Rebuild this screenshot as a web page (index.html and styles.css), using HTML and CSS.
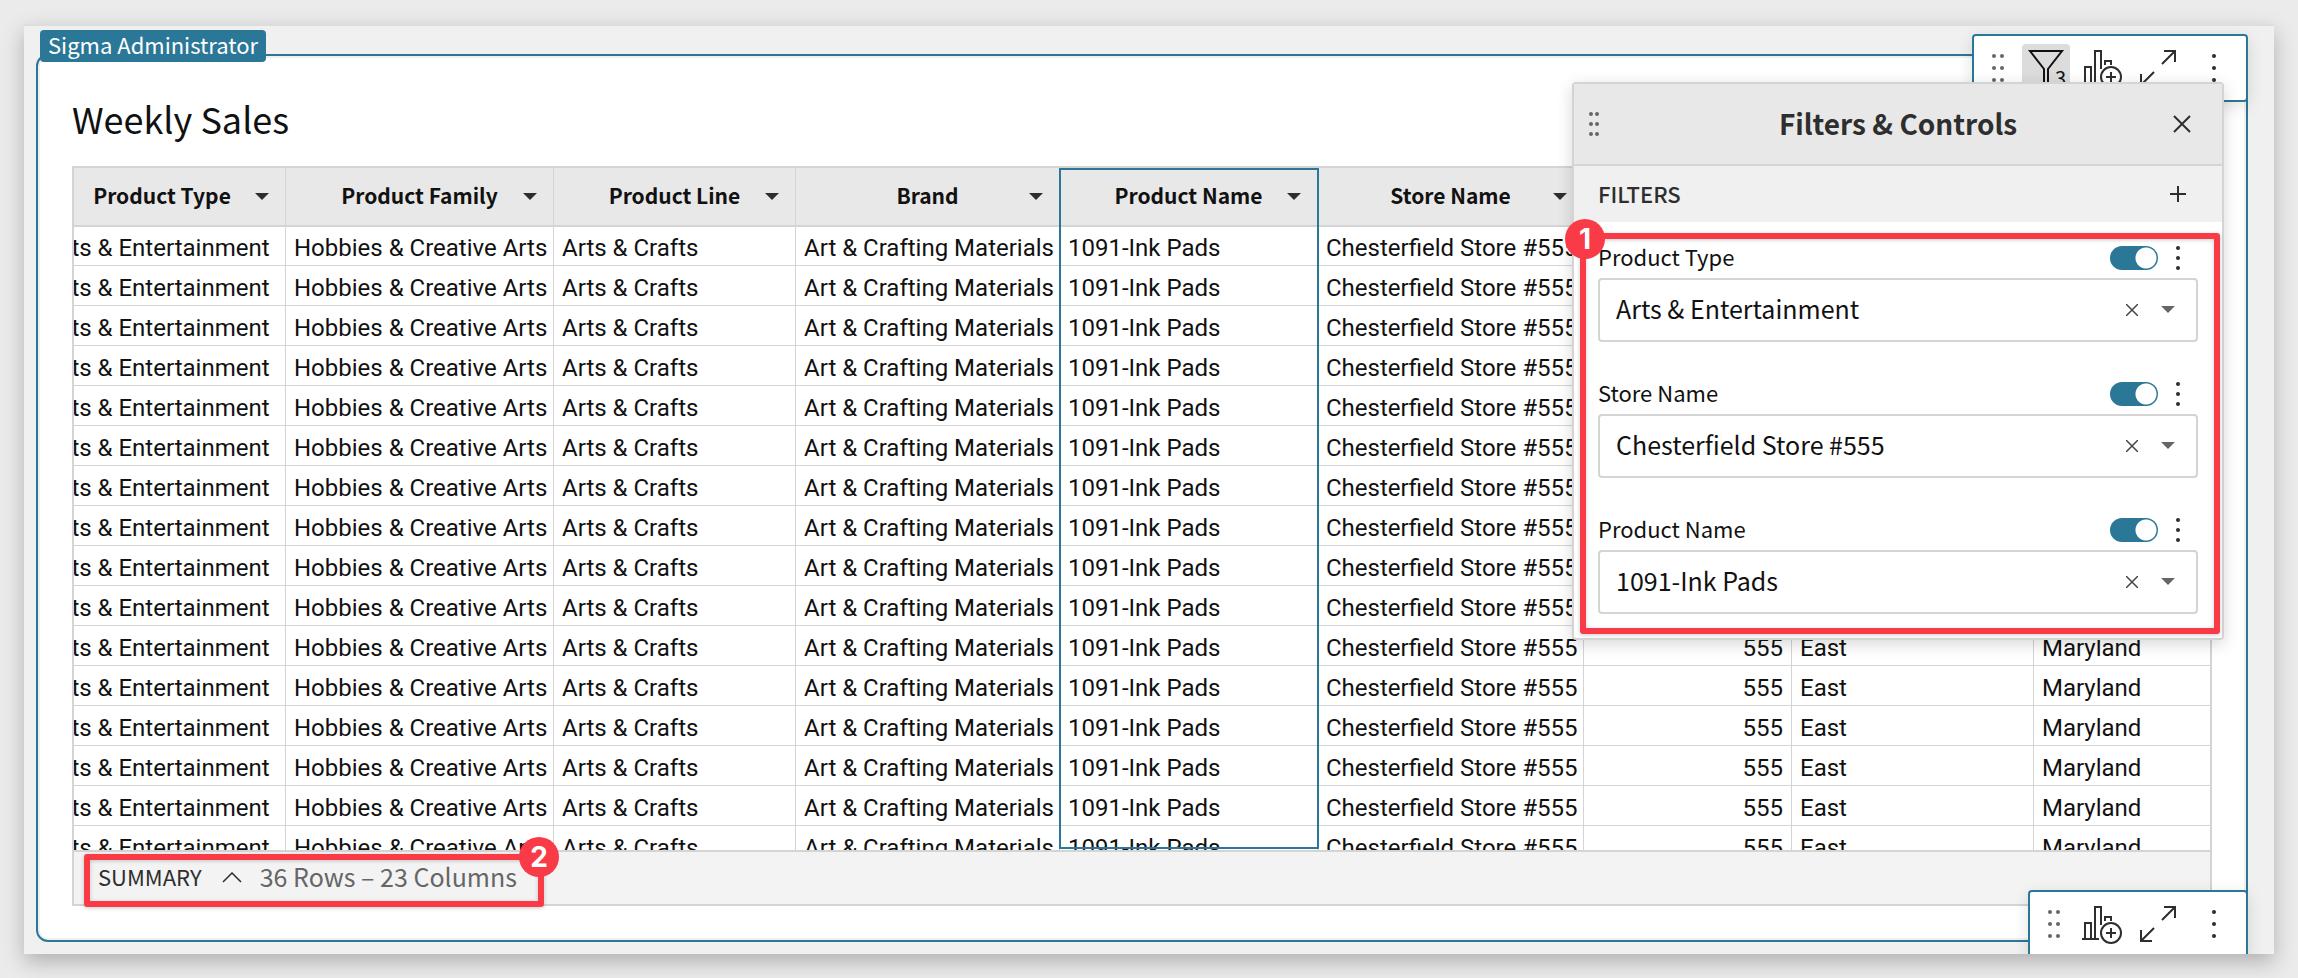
FILE: index.html
```html
<!DOCTYPE html>
<html lang="en">
<head>
<meta charset="utf-8">
<title>Weekly Sales</title>
<link rel="stylesheet" href="styles.css">
</head>
<body>
<svg class="sprite" aria-hidden="true">
  <symbol id="i-grip" viewBox="0 0 24 40"><g fill="#666"><circle cx="8" cy="8" r="2"/><circle cx="16" cy="8" r="2"/><circle cx="8" cy="20" r="2"/><circle cx="16" cy="20" r="2"/><circle cx="8" cy="32" r="2"/><circle cx="16" cy="32" r="2"/></g></symbol>
  <symbol id="i-kebab" viewBox="0 0 40 40"><g fill="#2e2e2e"><circle cx="20" cy="8" r="2"/><circle cx="20" cy="20" r="2"/><circle cx="20" cy="32" r="2"/></g></symbol>
  <symbol id="i-chart" viewBox="0 0 40 40"><g fill="none" stroke="#2e2e2e" stroke-width="2"><path d="M0 35H17M3 35V19H9V35M13 35V3H19V21M23 17V13H29V17"/><circle cx="29" cy="29" r="10"/><path d="M24 29H34M29 24V34"/></g></symbol>
  <symbol id="i-expand" viewBox="0 0 40 40"><path fill="none" stroke="#2e2e2e" stroke-width="2" d="M24 16L37 3M26 3H37V14M16 24L3 37M3 26V37H14"/></symbol>
  <symbol id="i-caret" viewBox="0 0 14 8"><path fill="currentColor" d="M0 0H14L7 7Z"/></symbol>
  <symbol id="i-more" viewBox="0 0 8 24"><g fill="#2e2e2e"><circle cx="4" cy="2" r="2"/><circle cx="4" cy="12" r="2"/><circle cx="4" cy="22" r="2"/></g></symbol>
  <symbol id="i-clear" viewBox="0 0 12 12"><path fill="none" stroke="#444" stroke-width="1.5" d="M0 0L12 12M12 0L0 12"/></symbol>
</svg>

<main class="frame">
  <span class="owner-tag">Sigma Administrator</span>

  <section class="card">
    <h1 class="card-title">Weekly Sales</h1>
    <div class="grid">
      <div class="grid-scroll">
        <table class="data">
          <colgroup>
            <col class="c-type"><col class="c-family"><col class="c-line"><col class="c-brand"><col class="c-name"><col class="c-store"><col class="c-key"><col class="c-region"><col>
          </colgroup>
          <thead>
            <tr>
              <th scope="col"><div class="head"><span>Product Type</span><button class="caret" aria-label="Product Type menu"><svg><use href="#i-caret"/></svg></button></div></th>
              <th scope="col"><div class="head"><span>Product Family</span><button class="caret" aria-label="Product Family menu"><svg><use href="#i-caret"/></svg></button></div></th>
              <th scope="col"><div class="head"><span>Product Line</span><button class="caret" aria-label="Product Line menu"><svg><use href="#i-caret"/></svg></button></div></th>
              <th scope="col"><div class="head"><span>Brand</span><button class="caret" aria-label="Brand menu"><svg><use href="#i-caret"/></svg></button></div></th>
              <th scope="col"><div class="head"><span>Product Name</span><button class="caret" aria-label="Product Name menu"><svg><use href="#i-caret"/></svg></button></div></th>
              <th scope="col"><div class="head"><span>Store Name</span><button class="caret" aria-label="Store Name menu"><svg><use href="#i-caret"/></svg></button></div></th>
              <th></th><th></th><th></th>
            </tr>
          </thead>
          <tbody id="rows"></tbody>
        </table>
        <div class="col-selection"></div>
      </div>
      <div class="summary">
        <span class="summary-label">SUMMARY</span>
        <button class="summary-toggle" aria-label="Expand summary"><svg viewBox="0 0 20 12"><path fill="none" stroke="#2e2e2e" stroke-width="1.5" d="M1 10L10 1L19 10"/></svg></button>
        <span class="summary-count">36 Rows – 23 Columns</span>
        <div class="mark mark-summary"><span class="mark-badge badge-right">2</span></div>
      </div>
    </div>
  </section>

  <div class="toolbar toolbar-top">
    <svg class="grip"><use href="#i-grip"/></svg>
    <button class="tool tool-active" aria-label="Filters, 3 active"><svg viewBox="0 0 48 48"><path fill="none" stroke="#111" stroke-width="2" d="M22 48V25L8 7H40L26 25V48"/></svg><span class="tool-count">3</span></button>
    <button class="tool" aria-label="Add chart"><svg><use href="#i-chart"/></svg></button>
    <button class="tool" aria-label="Expand"><svg><use href="#i-expand"/></svg></button>
    <button class="tool" aria-label="More"><svg><use href="#i-kebab"/></svg></button>
  </div>

  <div class="toolbar toolbar-bottom">
    <svg class="grip"><use href="#i-grip"/></svg>
    <button class="tool" aria-label="Add chart"><svg><use href="#i-chart"/></svg></button>
    <button class="tool" aria-label="Expand"><svg><use href="#i-expand"/></svg></button>
    <button class="tool" aria-label="More"><svg><use href="#i-kebab"/></svg></button>
  </div>

  <aside class="panel">
    <header class="panel-head">
      <svg class="panel-grip" viewBox="0 0 12 24"><g fill="#666"><circle cx="3" cy="2" r="2"/><circle cx="9" cy="2" r="2"/><circle cx="3" cy="12" r="2"/><circle cx="9" cy="12" r="2"/><circle cx="3" cy="22" r="2"/><circle cx="9" cy="22" r="2"/></g></svg>
      <h2 class="panel-title">Filters &amp; Controls</h2>
      <button class="panel-close" aria-label="Close"><svg viewBox="0 0 20 20"><path fill="none" stroke="#2e2e2e" stroke-width="2" d="M2 2L18 18M18 2L2 18"/></svg></button>
    </header>
    <div class="panel-section">
      <h3 class="section-title">FILTERS</h3>
      <button class="section-add" aria-label="Add filter"><svg viewBox="0 0 20 20"><path fill="none" stroke="#2e2e2e" stroke-width="2" d="M2 10H18M10 2V18"/></svg></button>
    </div>
    <div class="filters">
      <div class="filter">
        <div class="filter-head">
          <label for="f-type">Product Type</label>
          <input class="switch" type="checkbox" checked aria-label="Enable Product Type filter">
          <button class="more" aria-label="Product Type options"><svg><use href="#i-more"/></svg></button>
        </div>
        <div class="picker">
          <select id="f-type"><option>Arts &amp; Entertainment</option></select>
          <div class="picker-icons"><button class="clear" aria-label="Clear Product Type"><svg><use href="#i-clear"/></svg></button><svg class="picker-caret"><use href="#i-caret"/></svg></div>
        </div>
      </div>
      <div class="filter">
        <div class="filter-head">
          <label for="f-store">Store Name</label>
          <input class="switch" type="checkbox" checked aria-label="Enable Store Name filter">
          <button class="more" aria-label="Store Name options"><svg><use href="#i-more"/></svg></button>
        </div>
        <div class="picker">
          <select id="f-store"><option>Chesterfield Store #555</option></select>
          <div class="picker-icons"><button class="clear" aria-label="Clear Store Name"><svg><use href="#i-clear"/></svg></button><svg class="picker-caret"><use href="#i-caret"/></svg></div>
        </div>
      </div>
      <div class="filter">
        <div class="filter-head">
          <label for="f-name">Product Name</label>
          <input class="switch" type="checkbox" checked aria-label="Enable Product Name filter">
          <button class="more" aria-label="Product Name options"><svg><use href="#i-more"/></svg></button>
        </div>
        <div class="picker">
          <select id="f-name"><option>1091-Ink Pads</option></select>
          <div class="picker-icons"><button class="clear" aria-label="Clear Product Name"><svg><use href="#i-clear"/></svg></button><svg class="picker-caret"><use href="#i-caret"/></svg></div>
        </div>
      </div>
      <div class="mark mark-filters"><span class="mark-badge badge-left">1</span></div>
    </div>
  </aside>
</main>
<script src="app.js"></script>
</body>
</html>
```
FILE: styles.css
```css
:root {
  --blue: #2b7797;
  --line: #d4d4d4;
  --head: #e8e8e8;
  --soft: #f0f0f0;
  --ink: #111;
  --red: #f93b48;
  --ui: "Noto Sans CJK SC", "Open Sans", sans-serif;
}

* { box-sizing: border-box; }

body {
  margin: 0;
  padding: 24px;
  min-height: 100vh;
  display: flex;
  background: #ebebeb;
  color: var(--ink);
  font-family: var(--ui);
  font-size: 22px;
}

h1, h2, h3 { margin: 0; }

button {
  padding: 0;
  border: 0;
  background: none;
  color: inherit;
  font: inherit;
  cursor: pointer;
}

svg { display: block; }

.sprite { position: absolute; width: 0; height: 0; }

.frame {
  position: relative;
  flex: 1;
  min-width: 0;
  display: flex;
  padding: 28px 26px 12px 12px;
  border-top: 2px solid #ddd;
  background: var(--soft);
  box-shadow: 0 8px 20px rgba(0, 0, 0, 0.25);
  overflow: hidden;
}

.owner-tag {
  position: absolute;
  z-index: 1;
  top: 4px;
  left: 16px;
  padding: 0 8px 4px;
  border-radius: 4px;
  background: var(--blue);
  color: #fff;
  line-height: 28px;
}

.card {
  flex: 1;
  min-width: 0;
  display: flex;
  flex-direction: column;
  padding: 38px 34px 34px;
  border: 2px solid var(--blue);
  border-radius: 12px;
  background: #fff;
  box-shadow: inset 0 0 0 2px var(--soft);
}

.card-title {
  margin-bottom: 24px;
  font-size: 36px;
  font-weight: 400;
  line-height: 48px;
}

.grid {
  flex: 1;
  display: flex;
  flex-direction: column;
  border: 2px solid var(--line);
}

.grid-scroll {
  position: relative;
  flex: 1 1 0;
  min-height: 0;
  overflow: hidden;
}

.data {
  width: calc(100% + 35px);
  margin-left: -35px;
  table-layout: fixed;
  border-collapse: separate;
  border-spacing: 0;
}

.c-type { width: 247px; }
.c-family { width: 268px; }
.c-line { width: 242px; }
.c-brand { width: 264px; }
.c-name { width: 258px; }
.c-store { width: 266px; }
.c-key { width: 208px; }
.c-region { width: 242px; }

.data th {
  height: 59px;
  padding: 0 16px;
  border-right: 1px solid var(--line);
  border-bottom: 2px solid var(--line);
  background: var(--head);
  font-size: 21px;
  font-weight: 600;
}

.head {
  display: grid;
  grid-template-columns: 1fr auto 1fr;
  align-items: center;
  line-height: 28px;
}

.head span { grid-column: 2; padding-bottom: 4px; }

.caret { justify-self: end; color: #2e2e2e; }
.caret svg { width: 14px; height: 8px; }

.data td {
  height: 40px;
  padding: 5px 8px 0;
  border-right: 1px solid var(--line);
  border-bottom: 1px solid var(--line);
  font-family: Roboto, sans-serif;
  font-size: 24px;
  line-height: 32px;
  white-space: nowrap;
}

.data tbody tr:first-child td { height: 39px; padding-top: 4px; }
.data tr > :last-child { border-right: 0; }
.data .num { text-align: right; }

.col-selection {
  position: absolute;
  top: 0;
  bottom: 1px;
  left: 985px;
  width: 260px;
  border: 2px solid var(--blue);
}

.summary {
  position: relative;
  display: flex;
  align-items: center;
  height: 54px;
  padding-left: 24px;
  border-top: 2px solid var(--line);
  background: #f3f3f3;
  color: #2e2e2e;
}

.summary-label, .summary-count { padding-bottom: 4px; }

.summary-toggle { margin: 0 18px 0 20px; }
.summary-toggle svg { width: 20px; height: 12px; }

.summary-count { color: #666; font-size: 25px; }

.mark {
  position: absolute;
  border: 6px solid var(--red);
  border-radius: 3px;
  box-shadow: 0 1px 4px rgba(0, 0, 0, 0.2), inset 0 1px 4px rgba(0, 0, 0, 0.2);
  pointer-events: none;
}

.mark-summary { top: 2px; left: 10px; width: 460px; height: 53px; }
.mark-filters { top: 11px; right: 2px; bottom: 4px; left: 6px; }

.mark-badge {
  position: absolute;
  width: 40px;
  height: 40px;
  border-radius: 50%;
  background: var(--red);
  color: #fff;
  font-family: Inter, sans-serif;
  font-size: 28px;
  font-weight: 700;
  line-height: 40px;
  text-align: center;
}

.badge-left { top: -20px; left: -21px; }
.badge-right { top: -23px; right: -21px; }

.toolbar {
  position: absolute;
  right: 26px;
  display: flex;
  align-items: center;
  gap: 16px;
  height: 68px;
  padding: 0 12px;
  border: 2px solid var(--blue);
  border-radius: 4px;
  background: #fff;
  box-shadow: 0 4px 16px rgba(0, 0, 0, 0.12);
}

.toolbar-top { top: 8px; }
.toolbar-bottom { bottom: -4px; }

.grip { width: 24px; height: 40px; }
.tool { position: relative; width: 40px; height: 40px; }
.tool svg { width: 100%; height: 100%; }

.tool-active {
  width: 48px;
  height: 48px;
  margin: 0 -4px;
  border-radius: 4px;
  background: #dcdcdc;
}

.tool-count {
  position: absolute;
  right: 4px;
  bottom: 2px;
  font-size: 20px;
  line-height: 24px;
}

.panel {
  position: absolute;
  z-index: 2;
  top: 56px;
  right: 50px;
  width: 652px;
  border: 2px solid var(--line);
  border-radius: 4px;
  background: #fff;
  box-shadow: 0 4px 16px rgba(0, 0, 0, 0.16);
}

.panel-head {
  display: grid;
  grid-template-columns: 1fr auto 1fr;
  align-items: center;
  height: 82px;
  padding: 0 30px 0 14px;
  border-bottom: 2px solid var(--line);
  background: var(--head);
  color: #2e2e2e;
}

.panel-grip { width: 12px; height: 24px; }
.panel-title { padding: 0 0 2px 16px; font-size: 28px; font-weight: 600; line-height: 40px; }
.panel-close { justify-self: end; }
.panel-close svg, .section-add svg { width: 20px; height: 20px; }

.panel-section {
  display: flex;
  align-items: center;
  justify-content: space-between;
  height: 56px;
  padding: 0 34px 0 24px;
  background: var(--soft);
  color: #2e2e2e;
}

.section-title { padding-bottom: 2px; font-size: 22px; font-weight: 500; line-height: 32px; }

.filters {
  position: relative;
  display: flex;
  flex-direction: column;
  gap: 32px;
  padding: 16px 24px 24px;
}

.filter-head {
  display: flex;
  align-items: center;
  gap: 16px;
  height: 40px;
  padding-right: 16px;
}

.filter-head label { flex: 1; padding-bottom: 4px; line-height: 32px; }

.switch {
  appearance: none;
  width: 48px;
  height: 24px;
  margin: 0;
  border-radius: 12px;
  background: radial-gradient(circle at 36px 12px, #fff 10px, var(--blue) 11px);
}

.more svg { width: 8px; height: 24px; }

.picker { position: relative; }

.picker select {
  appearance: none;
  display: block;
  width: 100%;
  height: 64px;
  padding: 0 80px 4px 16px;
  border: 2px solid var(--line);
  border-radius: 4px;
  background: #fff;
  color: var(--ink);
  font-family: var(--ui);
  font-size: 25px;
}

.picker-icons {
  position: absolute;
  top: 0;
  right: 23px;
  height: 64px;
  display: flex;
  align-items: center;
  gap: 23px;
}

.clear svg { width: 12px; height: 12px; }
.picker-caret { width: 14px; height: 8px; color: #666; }
```
FILE: app.js
```js
const record = [
  "Arts & Entertainment",
  "Hobbies & Creative Arts",
  "Arts & Crafts",
  "Art & Crafting Materials",
  "1091-Ink Pads",
  "Chesterfield Store #555",
  555,
  "East",
  "Maryland",
];
const VISIBLE_ROWS = 16;
const body = document.getElementById("rows");

for (let i = 0; i < VISIBLE_ROWS; i++) {
  const row = body.insertRow();
  for (const value of record) {
    const cell = row.insertCell();
    cell.textContent = value;
    if (typeof value === "number") cell.className = "num";
  }
}
```
